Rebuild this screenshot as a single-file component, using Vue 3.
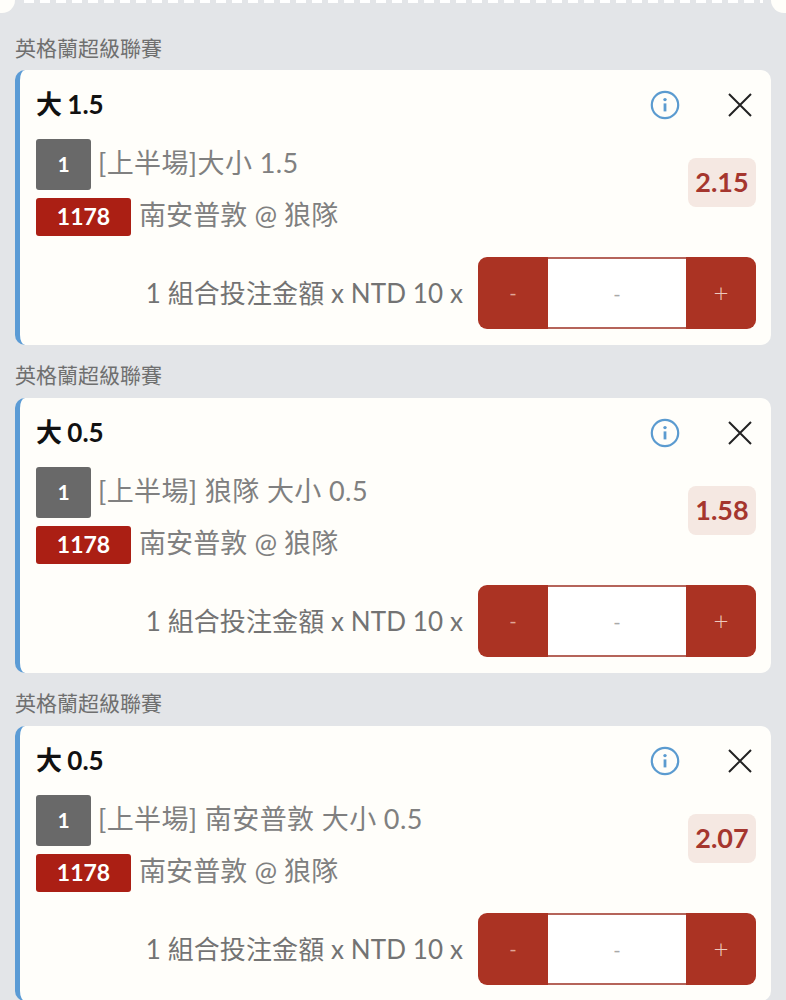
<template>
  <div class="page">
    <div class="ticket-edge">
      <span class="corner left"></span>
      <span class="dashes"></span>
      <span class="corner right"></span>
    </div>
    <section v-for="bet in bets" :key="bet.market" class="bet">
      <div class="league">英格蘭超級聯賽</div>
      <div class="card">
        <div class="title-row">
          <span class="title">大 {{ bet.line }}</span>
          <svg class="info" width="30" height="30" viewBox="0 0 30 30" fill="none">
            <circle cx="15" cy="15" r="13.2" stroke="#5b9bd0" stroke-width="2.2" />
            <circle cx="15" cy="9.6" r="1.7" fill="#5b9bd0" />
            <path d="M15 13.4v8" stroke="#5b9bd0" stroke-width="2.8" />
          </svg>
          <svg class="close" width="26" height="26" viewBox="0 0 26 26" fill="none">
            <path d="M2 2l22 22M24 2L2 24" stroke="#222" stroke-width="2" />
          </svg>
        </div>
        <div class="detail">
          <div class="lines">
            <div class="market-row">
              <span class="num">1</span>
              <span class="market">{{ bet.market }}</span>
            </div>
            <div class="match-row">
              <span class="code">1178</span>
              <span class="match">南安普敦 @ 狼隊</span>
            </div>
          </div>
          <span class="odds">{{ bet.odds }}</span>
        </div>
        <div class="stake-row">
          <span class="stake-text">1 組合投注金額 x NTD 10 x</span>
          <div class="stepper">
            <button type="button" class="step">-</button>
            <span class="amount">-</span>
            <button type="button" class="step plus">+</button>
          </div>
        </div>
      </div>
    </section>
  </div>
</template>

<script setup>
const bets = [
  { line: '1.5', market: '[上半場]大小 1.5', odds: '2.15' },
  { line: '0.5', market: '[上半場] 狼隊 大小 0.5', odds: '1.58' },
  { line: '0.5', market: '[上半場] 南安普敦 大小 0.5', odds: '2.07' }
]
</script>

<style>
html,
body {
  margin: 0;
  background: #e3e5e8;
}
</style>

<style scoped>
.page {
  height: 1000px;
  overflow: hidden;
  background: #e3e5e8;
  font-family: Lato, "Noto Sans CJK TC", sans-serif;
}

.ticket-edge {
  display: flex;
  height: 17px;
}

.dashes {
  flex: 1;
  height: 3px;
  background: repeating-linear-gradient(90deg, #fff 0 10px, transparent 10px 16px);
}

.corner {
  width: 15px;
  height: 13px;
  background: #fffefa;
}

.corner.left {
  border-radius: 0 0 13px 0;
  margin-right: 9px;
}

.corner.right {
  border-radius: 0 0 0 13px;
  margin-left: 8px;
}

.bet {
  padding: 0 15px;
}

.league {
  height: 53px;
  padding-top: 19px;
  box-sizing: border-box;
  font-size: 21px;
  line-height: 23px;
  color: #6f6f6f;
}

.bet:not(:first-of-type) .league {
  padding-top: 18px;
}

.card {
  height: 275px;
  box-sizing: border-box;
  padding: 0 15px 0 16px;
  background: #fffefa;
  border-left: 5px solid #5b9bd5;
  border-radius: 10px;
}

.title-row {
  display: flex;
  align-items: center;
  height: 69px;
}

.title {
  flex: 1;
  padding-bottom: 4px;
  font-size: 26px;
  font-weight: 700;
  word-spacing: -1px;
  color: #111;
}

.info {
  margin-right: 47px;
  margin-left: -5px;
}

.close {
  margin-right: 3px;
}

.detail {
  display: flex;
  align-items: center;
  justify-content: space-between;
}

.market-row {
  display: flex;
  align-items: center;
  gap: 7px;
  height: 51px;
  margin-bottom: 8px;
}

.num {
  width: 55px;
  height: 51px;
  padding-bottom: 2px;
  box-sizing: border-box;
  display: flex;
  align-items: center;
  justify-content: center;
  background: #696969;
  border-radius: 3px;
  color: #fff;
  font-size: 21px;
  font-weight: 700;
}

.market,
.match {
  font-size: 27px;
  color: #808080;
  letter-spacing: 0.4px;
  white-space: nowrap;
  padding-bottom: 7px;
}

.match {
  letter-spacing: 0.1px;
}

.match-row {
  display: flex;
  align-items: center;
  gap: 8px;
  height: 38px;
}

.code {
  width: 95px;
  height: 38px;
  padding-bottom: 2px;
  box-sizing: border-box;
  display: flex;
  align-items: center;
  justify-content: center;
  background: #ab1f14;
  border-radius: 3px;
  color: #fff;
  font-size: 23px;
  font-weight: 700;
}

.odds {
  width: 68px;
  height: 49px;
  margin-top: -11px;
  padding-bottom: 2px;
  box-sizing: border-box;
  display: flex;
  align-items: center;
  justify-content: center;
  background: #f5e8e2;
  border-radius: 8px;
  color: #a5362e;
  font-size: 27px;
  font-weight: 700;
}

.stake-row {
  display: flex;
  align-items: center;
  justify-content: flex-end;
  gap: 15px;
  margin-top: 21px;
}

.stake-text {
  padding-bottom: 4px;
  font-size: 26px;
  letter-spacing: 0.1px;
  color: #737373;
  white-space: nowrap;
}

.stepper {
  display: flex;
  width: 278px;
  height: 72px;
  box-sizing: border-box;
  border-radius: 9px;
  overflow: hidden;
  background: #fff;
}

.step {
  width: 70px;
  border: none;
  padding: 0 0 3px;
  background: #ab3323;
  color: #e0a697;
  font-family: inherit;
  font-size: 20px;
}

.step.plus {
  color: #eec9bf;
  font-size: 26px;
  font-weight: 300;
}

.amount {
  flex: 1;
  display: flex;
  align-items: center;
  justify-content: center;
  border-top: 2px solid #b5645a;
  border-bottom: 2px solid #b5645a;
  color: #a9a9a9;
  font-size: 20px;
}
</style>
